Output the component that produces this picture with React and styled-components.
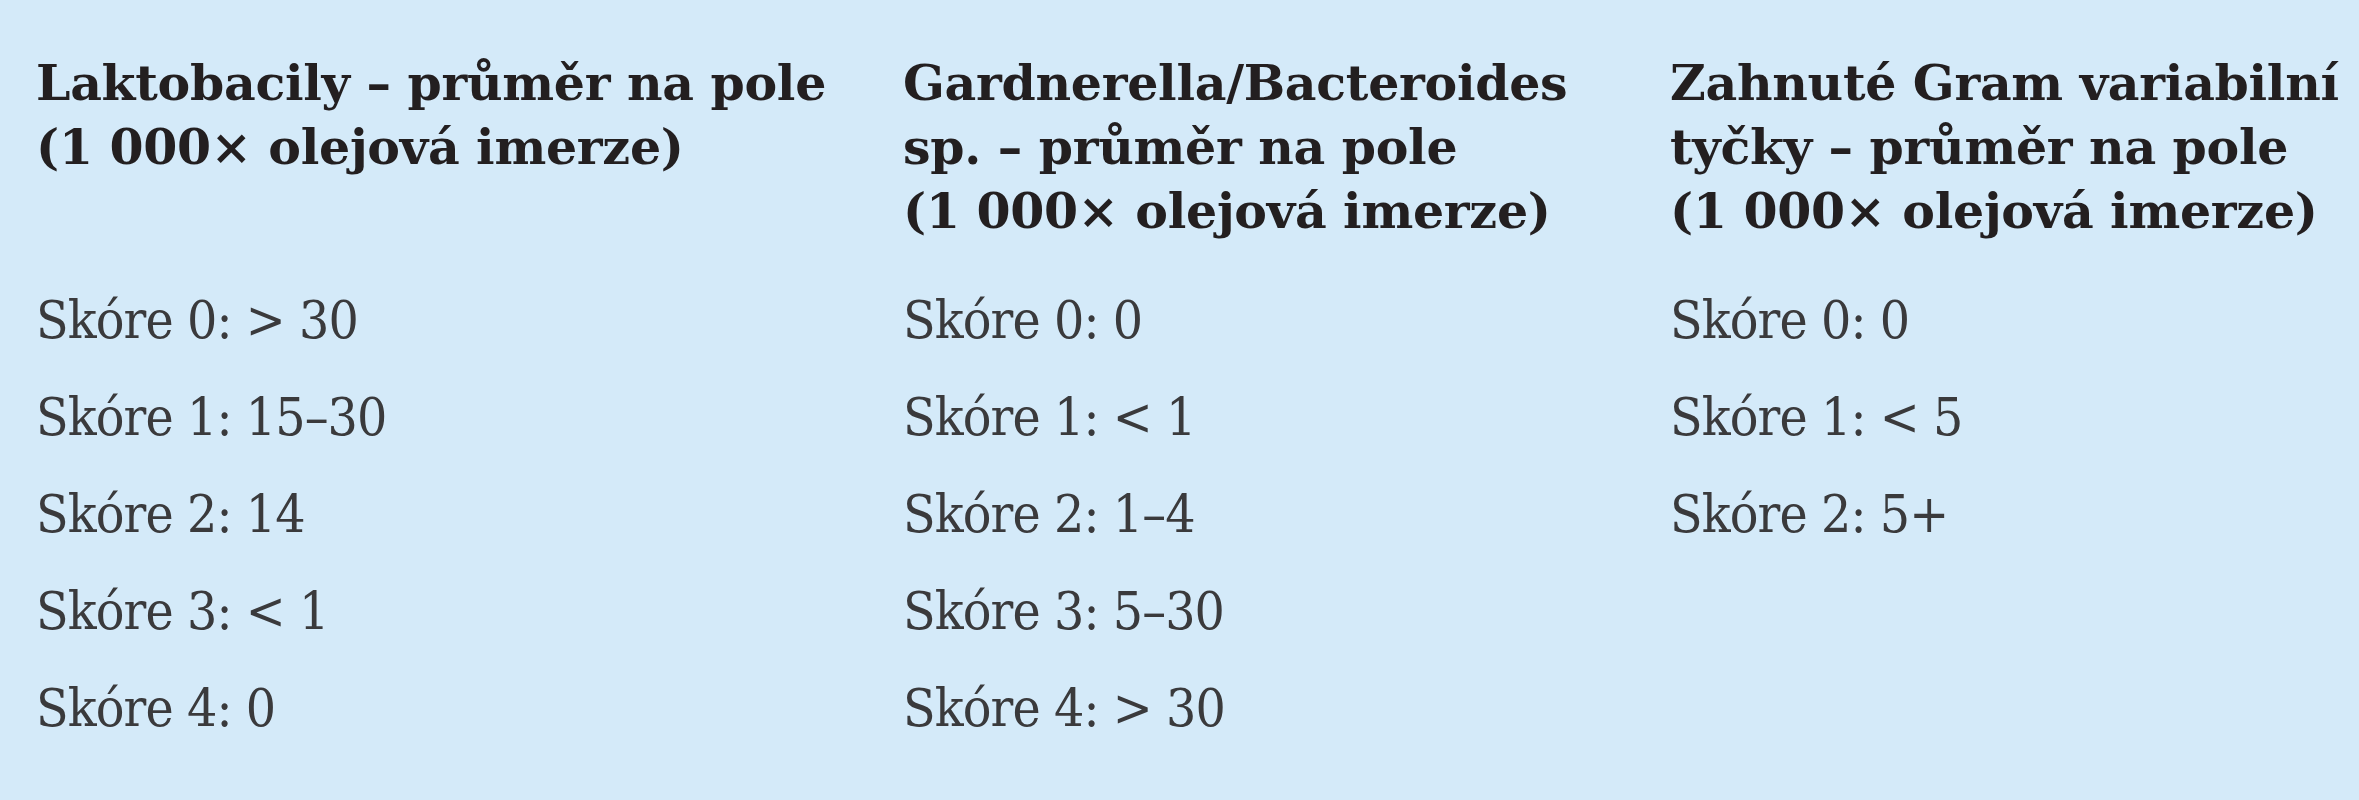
import React from "react";
import styled, { createGlobalStyle } from "styled-components";

const GlobalStyle = createGlobalStyle`
  html, body {
    margin: 0;
    padding: 0;
    background: #d4eaf9;
  }
  body {
    font-family: "DejaVu Serif", "Liberation Serif", serif;
  }
`;

const Panel = styled.div`
  box-sizing: border-box;
  width: 2359px;
  min-height: 800px;
  background: #d4eaf9;
  padding: 51px 0 0 36px;
  display: grid;
  grid-template-columns: 867px 767px 1fr;
  align-content: start;
`;

const HeadCell = styled.div`
  display: flex;
  flex-direction: column;
  padding-bottom: 28px;
`;

const HeadLine = styled.span`
  font-family: "DejaVu Serif", "Liberation Serif", serif;
  font-weight: 700;
  font-size: 49px;
  line-height: 64px;
  color: #231f20;
  white-space: nowrap;
  letter-spacing: -0.3px;
`;

const Cell = styled.div`
  font-family: "DejaVu Serif", "Liberation Serif", serif;
  font-weight: 400;
  font-stretch: condensed;
  font-size: 53px;
  line-height: 97px;
  letter-spacing: -0.9px;
  color: #3a3a3c;
  white-space: nowrap;
  height: 97px;
`;

const headers = [
  ["Laktobacily – průměr na pole", "(1\u00a0000× olejová imerze)"],
  ["Gardnerella/Bacteroides", "sp. – průměr na pole", "(1\u00a0000× olejová imerze)"],
  ["Zahnuté Gram variabilní", "tyčky – průměr na pole", "(1\u00a0000× olejová imerze)"],
];

const columns = [
  ["Skóre 0: > 30", "Skóre 1: 15–30", "Skóre 2: 14", "Skóre 3: < 1", "Skóre 4: 0"],
  ["Skóre 0: 0", "Skóre 1: < 1", "Skóre 2: 1–4", "Skóre 3: 5–30", "Skóre 4: > 30"],
  ["Skóre 0: 0", "Skóre 1: < 5", "Skóre 2: 5+"],
];

export default function App() {
  const rows = [0, 1, 2, 3, 4];
  return (
    <>
      <GlobalStyle />
      <Panel>
        {headers.map((lines, i) => (
          <HeadCell key={i}>
            {lines.map((l) => (
              <HeadLine key={l}>{l}</HeadLine>
            ))}
          </HeadCell>
        ))}
        {rows.map((r) =>
          columns.map((col, c) => (
            <Cell key={`${r}-${c}`}>{col[r] || ""}</Cell>
          ))
        )}
      </Panel>
    </>
  );
}
